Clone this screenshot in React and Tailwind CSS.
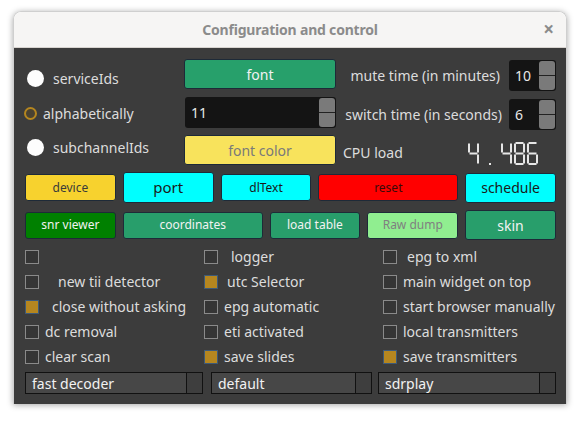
import React from "react";

const SEG = {
  a: [1.5, 0, 8, 2],
  b: [9, 1.5, 2, 9],
  c: [9, 12.5, 2, 9],
  d: [1.5, 21, 8, 2],
  e: [0, 12.5, 2, 9],
  f: [0, 1.5, 2, 9],
  g: [1.5, 10.5, 8, 2],
};
const DIG = { "4": "fgbc", "8": "abcdefg", "6": "afgedc" };

function Digit({ d, x }) {
  return (
    <g transform={`translate(${x},0)`}>
      {DIG[d].split("").map((s) => {
        const [sx, sy, w, h] = SEG[s];
        return <rect key={s} x={sx} y={sy} width={w} height={h} fill="#e6e6e6" />;
      })}
    </g>
  );
}

function LCD() {
  return (
    <svg width="72" height="23" viewBox="0 0 72 23">
      <Digit d="4" x={1} />
      <rect x={22} y={21} width={2} height={2} fill="#e6e6e6" />
      <Digit d="4" x={34} />
      <Digit d="8" x={47} />
      <Digit d="6" x={60} />
    </svg>
  );
}

function Spin({ value, w }) {
  return (
    <div className={`flex h-[31px] ${w} rounded-[3px] bg-[#141414] overflow-hidden`}>
      <div className="flex-1 flex items-center pl-[6px] text-[14px] text-[#e8e8e8]">{value}</div>
      <div className="w-[16px] flex flex-col bg-[#7a7a7a] rounded-[3px] my-[1px] mr-[1px]">
        <div className="flex-1 border-b border-[#222]" />
        <div className="flex-1" />
      </div>
    </div>
  );
}

function Check({ checked, label, gap }) {
  return (
    <div className="flex items-center h-[25px]">
      <div
        className={
          checked
            ? "w-[14px] h-[14px] shrink-0 bg-[#b5861f] border border-[#3e5a78]"
            : "w-[14px] h-[14px] shrink-0 bg-[#353535] border border-[#8a8a8a]"
        }
      />
      {label ? (
        <span className={`${gap} text-[14px] text-[#dcdcdc] whitespace-nowrap leading-none`}>{label}</span>
      ) : null}
    </div>
  );
}

function Combo({ label, w }) {
  return (
    <div className={`flex h-[22px] ${w} border border-[#111] bg-[#474747]`}>
      <div className="flex-1 flex items-center pl-[6px] text-[14px] text-[#f2f2f2] border-r border-[#111]">
        {label}
      </div>
      <div className="w-[15px] bg-[#3e3e3e]" />
    </div>
  );
}

export default function App() {
  return (
    <div className="w-[581px] h-[421px] bg-white font-['Noto_Sans',sans-serif] pt-[11px] pl-[13px]">
      <div className="w-[554px] rounded-t-[8px] shadow-[0_1px_6px_rgba(0,0,0,0.35)] border border-[#cfcfcf] border-b-0">
        {/* title bar */}
        <div className="h-[36px] bg-[#f6f5f4] rounded-t-[8px] grid grid-cols-[1fr_auto_1fr] items-center border-b border-[#d8d4d0]">
          <div />
          <div className="text-[14px] font-bold text-[#8b8b8b] tracking-[-0.2px]">Configuration and control</div>
          <div className="flex justify-end pr-[12px] text-[#8b8b8b] text-[19px] leading-none font-bold">×</div>
        </div>
        {/* body */}
        <div className="h-[356px] bg-[#3c3c3c] px-[10px] flex flex-col">
          {/* top section */}
          <div className="flex h-[119px]">
            {/* radios */}
            <div className="w-[160px] flex flex-col">
              <div className="flex items-center h-[20px] mt-[20px]">
                <div className="w-[17px] h-[17px] rounded-full bg-[#fdfdfd] ml-[3px]" />
                <span className="ml-[9px] text-[14px] text-[#dcdcdc]">serviceIds</span>
              </div>
              <div className="flex items-center h-[20px] mt-[15px]">
                <div className="w-[13px] h-[13px] rounded-full border-2 border-[#b5861f] bg-[#4a4232]" />
                <span className="ml-[6px] text-[14px] text-[#dcdcdc]">alphabetically</span>
              </div>
              <div className="flex items-center h-[20px] mt-[14px]">
                <div className="w-[17px] h-[17px] rounded-full bg-[#fdfdfd] ml-[3px]" />
                <span className="ml-[9px] text-[14px] text-[#dcdcdc]">subchannelIds</span>
              </div>
            </div>
            {/* middle */}
            <div className="w-[152px] flex flex-col">
              <div className="mt-[11px] h-[30px] rounded-[3px] border border-[#1e2a38] bg-[#27a06b] flex items-center justify-center text-[14px] text-[#f2f2f2]">
                font
              </div>
              <div className="mt-[8px] pl-[1px]">
                <Spin value="11" w="w-[151px]" />
              </div>
              <div className="mt-[7px] h-[30px] rounded-[3px] border border-[#1e2a38] bg-[#f8e35c] flex items-center justify-center text-[14px] text-[#7a7a7a]">
                font color
              </div>
            </div>
            {/* right */}
            <div className="flex-1 flex flex-col pl-[7px]">
              <div className="mt-[12px] h-[31px] flex items-center justify-end">
                <span className="text-[14px] text-[#dcdcdc] mr-[9px]">mute time (in minutes)</span>
                <Spin value="10" w="w-[47px]" />
              </div>
              <div className="mt-[8px] h-[31px] flex items-center justify-end">
                <span className="text-[14px] text-[#dcdcdc] mr-[7px]">switch time (in seconds)</span>
                <Spin value="6" w="w-[47px]" />
              </div>
              <div className="mt-[7px] h-[30px] flex items-center">
                <span className="text-[14px] text-[#dcdcdc]">CPU load</span>
                <div className="ml-auto mr-[17px] flex items-center mt-[2px]">
                  <LCD />
                </div>
              </div>
            </div>
          </div>

          {/* button row 1 */}
          <div className="mt-[5px] h-[31px] flex items-center gap-[7px] pl-[1px]">
            <div className="w-[91px] h-[27px] rounded-[3px] border border-[#1e2a38] bg-[#f7d22e] flex items-center justify-center text-[12px] text-[#3a3a3a]">
              device
            </div>
            <div className="w-[91px] h-[31px] rounded-[3px] border border-[#1e2a38] bg-[#00ffff] flex items-center justify-center text-[15px] text-[#1a1a1a]">
              port
            </div>
            <div className="w-[91px] h-[27px] rounded-[3px] border border-[#1e2a38] bg-[#00ffff] flex items-center justify-center text-[12px] text-[#1a1a1a]">
              dlText
            </div>
            <div className="w-[140px] h-[27px] rounded-[3px] border border-[#1e2a38] bg-[#ff0000] flex items-center justify-center text-[12px] text-[#3a0a0a]">
              reset
            </div>
            <div className="w-[91px] h-[30px] rounded-[3px] border border-[#1e2a38] bg-[#00ffff] flex items-center justify-center text-[14px] text-[#1a1a1a]">
              schedule
            </div>
          </div>

          {/* button row 2 */}
          <div className="mt-[7px] h-[30px] flex items-center gap-[7px] pl-[1px]">
            <div className="w-[91px] h-[27px] rounded-[3px] border border-[#1e2a38] bg-[#008000] flex items-center justify-center text-[12px] text-[#f2f2f2]">
              snr viewer
            </div>
            <div className="w-[140px] h-[27px] rounded-[3px] border border-[#1e2a38] bg-[#289e6b] flex items-center justify-center text-[12px] text-[#f2f2f2]">
              coordinates
            </div>
            <div className="w-[91px] h-[27px] rounded-[3px] border border-[#1e2a38] bg-[#289e6b] flex items-center justify-center text-[12px] text-[#f2f2f2]">
              load table
            </div>
            <div className="w-[91px] h-[27px] rounded-[3px] border border-[#1e2a38] bg-[#90ee90] flex items-center justify-center text-[12px] text-[#808080]">
              Raw dump
            </div>
            <div className="w-[91px] h-[30px] rounded-[3px] border border-[#1e2a38] bg-[#289e6b] flex items-center justify-center text-[14px] text-[#f2f2f2]">
              skin
            </div>
          </div>

          {/* checkboxes */}
          <div className="mt-[4px] grid grid-cols-[179px_179px_1fr] pl-[1px]">
            <Check />
            <Check label="logger" gap="ml-[13px]" />
            <Check label="epg to xml" gap="ml-[10px]" />
            <Check label="new tii detector" gap="ml-[19px]" />
            <Check checked label="utc Selector" gap="ml-[9px]" />
            <Check label="main widget on top" gap="ml-[6px]" />
            <Check checked label="close without asking" gap="ml-[13px]" />
            <Check label="epg automatic" gap="ml-[6px]" />
            <Check label="start browser manually" gap="ml-[6px]" />
            <Check label="dc removal" gap="ml-[6px]" />
            <Check label="eti activated" gap="ml-[6px]" />
            <Check label="local transmitters" gap="ml-[6px]" />
            <Check label="clear scan" gap="ml-[6px]" />
            <Check checked label="save slides" gap="ml-[6px]" />
            <Check checked label="save transmitters" gap="ml-[6px]" />
          </div>

          {/* combos */}
          <div className="mt-[3px] flex pl-[1px]">
            <Combo label="fast decoder" w="w-[179px]" />
            <div className="ml-[8px]">
              <Combo label="default" w="w-[161px]" />
            </div>
            <div className="ml-[6px]">
              <Combo label="sdrplay" w="w-[178px]" />
            </div>
          </div>
        </div>
      </div>
    </div>
  );
}
